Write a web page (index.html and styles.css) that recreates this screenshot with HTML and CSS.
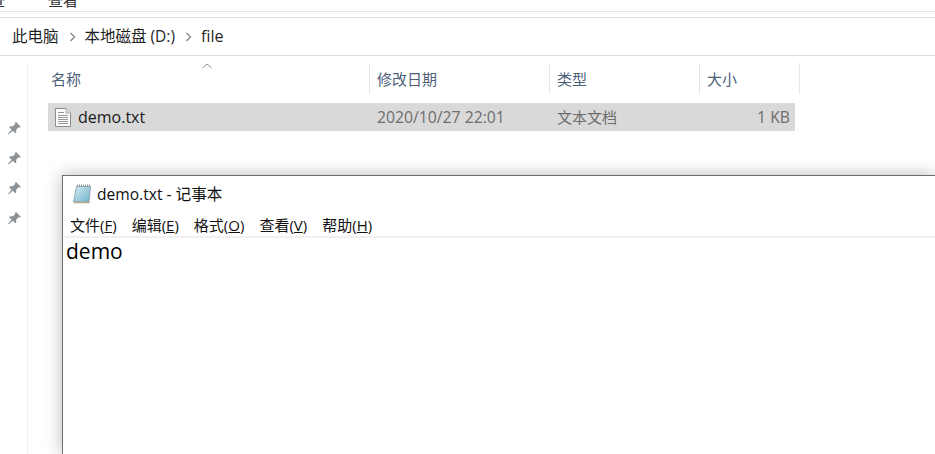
FILE: index.html
```html
<!DOCTYPE html>
<html lang="zh-CN">
<head>
    <meta charset="UTF-8">
    <title>file</title>
    <link rel="stylesheet" href="styles.css">
</head>
<body>
    <div class="ribbon"><span class="ribbon-a">查</span><span class="ribbon-b">查看</span></div>
    <div class="ribbon-gap"></div>

    <div class="crumbs">
        <span class="crumb">此电脑</span>
        <svg class="chev" width="7" height="10" viewBox="0 0 7 10"><path d="M1.5 1l4 4-4 4" fill="none" stroke="#8a8a8a" stroke-width="1.4"/></svg>
        <span class="crumb">本地磁盘 (D:)</span>
        <svg class="chev" width="7" height="10" viewBox="0 0 7 10"><path d="M1.5 1l4 4-4 4" fill="none" stroke="#8a8a8a" stroke-width="1.4"/></svg>
        <span class="crumb crumb-last">file</span>
    </div>

    <div class="explorer">
        <div class="side">
            <svg class="pin" width="15" height="15" viewBox="0 0 14 14"><path d="M8.500 1l4.500 4.500-1.200.6-1-.3-2.300 2.300.2 2.400-1 1-2.300-2.300L1.500 12.500 1 12l3.300-3.900L2 5.800l1-1 2.400.2L7.700 2.700l-.3-1z" fill="#8b9298"/></svg>
            <svg class="pin" width="15" height="15" viewBox="0 0 14 14"><path d="M8.500 1l4.500 4.500-1.200.6-1-.3-2.300 2.300.2 2.400-1 1-2.300-2.300L1.500 12.500 1 12l3.300-3.900L2 5.800l1-1 2.400.2L7.700 2.700l-.3-1z" fill="#8b9298"/></svg>
            <svg class="pin" width="15" height="15" viewBox="0 0 14 14"><path d="M8.500 1l4.500 4.500-1.200.6-1-.3-2.300 2.300.2 2.400-1 1-2.300-2.300L1.500 12.500 1 12l3.300-3.900L2 5.800l1-1 2.400.2L7.700 2.700l-.3-1z" fill="#8b9298"/></svg>
            <svg class="pin" width="15" height="15" viewBox="0 0 14 14"><path d="M8.500 1l4.500 4.500-1.200.6-1-.3-2.300 2.300.2 2.400-1 1-2.300-2.300L1.500 12.500 1 12l3.300-3.900L2 5.800l1-1 2.400.2L7.700 2.700l-.3-1z" fill="#8b9298"/></svg>
        </div>

        <div class="files">
            <div class="sort-wrap">
                <svg class="sort" width="10" height="6" viewBox="0 0 10 6"><path d="M.5 5L5 1l4.500 4" fill="none" stroke="#8f8f8f"/></svg>
            </div>
            <div class="head">
                <div class="col col-name">名称</div>
                <div class="col col-date">修改日期</div>
                <div class="col col-type">类型</div>
                <div class="col col-size">大小</div>
            </div>
            <div class="row">
                <div class="cell-name">
                    <svg width="16" height="19" viewBox="0 0 16 19">
                        <path d="M.5.500h10.500l4.500 4.500v13.500H.5z" fill="#fafafa" stroke="#8c8c8c"/>
                        <path d="M11 .5v4.500h4.500" fill="#e4e4e4" stroke="#a8a8a8"/>
                        <path d="M3 4.500h6M3 7.500h10M3 9.500h10M3 11.500h10M3 13.500h10M3 15.500h10" stroke="#9a9a9a"/>
                    </svg>
                    <span>demo.txt</span>
                </div>
                <div class="cell-date">2020/10/27 22:01</div>
                <div class="cell-type">文本文档</div>
                <div class="cell-size">1 KB</div>
            </div>
        </div>
    </div>

    <div class="notepad">
        <div class="title">
            <svg width="20" height="20" viewBox="0 0 20 20">
                <defs>
                    <linearGradient id="padfill" x1="0" y1="0" x2="1" y2="1">
                        <stop offset="0" stop-color="#d5ecf4"/>
                        <stop offset="1" stop-color="#6fb0c9"/>
                    </linearGradient>
                </defs>
                <path d="M4.500 2.500h14l-1.500 15.500h-15.500z" fill="url(#padfill)" stroke="#8fa9b3"/>
                <path d="M2 18.500h15.500" stroke="#b5a98c" stroke-width="1.500"/>
                <path d="M5 1.500h13" stroke="#8a8f92" stroke-width="2" stroke-dasharray="1 1"/>
            </svg>
            <span class="title-text">demo.txt - 记事本</span>
        </div>
        <div class="menu">
            <span>文件(<u>F</u>)</span>
            <span>编辑(<u>E</u>)</span>
            <span>格式(<u>O</u>)</span>
            <span>查看(<u>V</u>)</span>
            <span>帮助(<u>H</u>)</span>
        </div>
        <div class="text">demo</div>
    </div>
</body>
</html>
```

FILE: styles.css
```css
html, body {
    height: 454px;
    overflow: hidden;
}
body {
    margin: 0;
    background: #fff;
    color: #1a1a1a;
    font-family: "Open Sans", "Noto Sans CJK SC", sans-serif;
    font-size: 15px;
    position: relative;
}
.ribbon {
    height: 11px;
    border-bottom: 1px solid #e3e3e3;
    overflow: hidden;
    display: flex;
    line-height: 0;
}
.ribbon span {
    display: block;
    font-size: 15px;
    color: #333;
}
.ribbon-a {
    margin-left: -10px;
}
.ribbon-b {
    margin-left: 43px;
}
.ribbon-gap {
    height: 5px;
    border-bottom: 1px solid #dcdcdc;
}
.crumbs {
    height: 35px;
    padding: 0 0 2px 12px;
    border-bottom: 1px solid #dcdcdc;
    display: flex;
    align-items: center;
}
.crumb {
    font-size: 15.500px;
    color: #1f1f1f;
}
.crumb-last {
    font-size: 16px;
}
.chev {
    margin: 2px 9px 0 10px;
}
.explorer {
    display: flex;
    padding-top: 7px;
    height: 391px;
}
.side {
    width: 28px;
    border-right: 1px solid #efefef;
    display: flex;
    flex-direction: column;
    align-items: center;
    gap: 15px;
    padding: 58px 0 0 2px;
    box-sizing: border-box;
}
.files {
    margin-left: 20px;
    position: relative;
}
.sort-wrap {
    position: absolute;
    left: 154px;
    top: 0;
    line-height: 0;
}
.head {
    display: flex;
    height: 31px;
}
.col {
    box-sizing: border-box;
    padding: 5px 0 0 7px;
    border-right: 1px solid #e5e5e5;
    color: #4c607a;
    font-size: 15px;
}
.col-name { width: 322px; padding-left: 3px; }
.col-date { width: 180px; }
.col-type { width: 150px; }
.col-size { width: 100px; }
.row {
    margin-top: 9px;
    height: 28px;
    width: 747px;
    background: #d9d9d9;
    display: flex;
    align-items: center;
    color: #6d6d6d;
    font-size: 15.750px;
}
.cell-name {
    width: 322px;
    box-sizing: border-box;
    padding-left: 7px;
    display: flex;
    align-items: center;
    gap: 7px;
    color: #1a1a1a;
    font-size: 16px;
}
.cell-date {
    width: 180px;
    padding-left: 7px;
    box-sizing: border-box;
}
.cell-type {
    width: 150px;
    padding: 0 0 2px 7px;
    box-sizing: border-box;
    font-size: 15px;
}
.cell-size {
    width: 95px;
    padding-right: 5px;
    box-sizing: border-box;
    text-align: right;
}
/* window lies over the explorer and runs off the page */
.notepad {
    position: absolute;
    left: 62px;
    top: 175px;
    right: 0;
    bottom: 0;
    background: #fff;
    border: 1px solid #6e6e6e;
    border-width: 1px 0 0 1px;
    box-shadow: 0 0 16px rgba(0, 0, 0, 0.28);
}
.title {
    height: 36px;
    display: flex;
    align-items: center;
    gap: 5px;
    padding-left: 9px;
    font-size: 15.600px;
    color: #111;
}
.title-text {
    margin-bottom: 2px;
}
.menu {
    height: 24px;
    display: flex;
    align-items: center;
    gap: 15px;
    padding-left: 7px;
    border-bottom: 2px solid #f0f0f0;
    font-size: 15px;
    color: #111;
}
.text {
    padding: 0 0 0 3px;
    font-size: 21px;
    line-height: 27px;
    color: #000;
}
```
